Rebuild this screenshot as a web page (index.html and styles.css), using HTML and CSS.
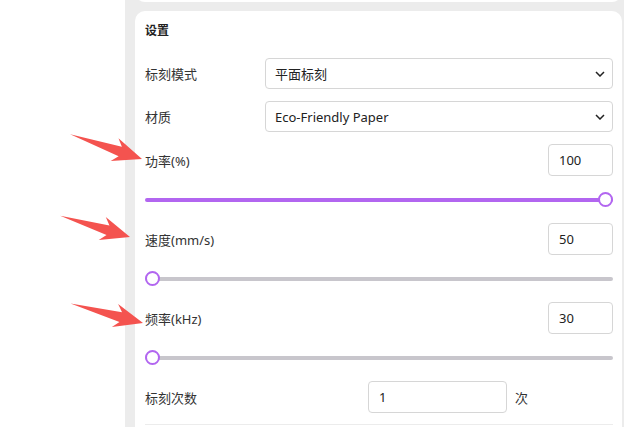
FILE: index.html
```html
<!DOCTYPE html>
<html lang="zh-CN">
<head>
  <meta charset="UTF-8">
  <meta name="viewport" content="width=device-width, initial-scale=1.0">
  <title>设置</title>
  <link rel="stylesheet" href="styles.css">
</head>
<body>

  <div class="app">
    <aside class="side"></aside>

    <main class="main">
      <div class="card card-prev"></div>

      <section class="card settings">
        <h3 class="card-title">设置</h3>

        <div class="field field-select">
          <label class="label">标刻模式</label>
          <div class="select-wrap">
            <select class="select">
              <option>平面标刻</option>
            </select>
            <svg class="chevron" width="10" height="6" viewBox="0 0 10 6"><path d="M1 1 L5 5 L9 1" /></svg>
          </div>
        </div>

        <div class="field field-select">
          <label class="label">材质</label>
          <div class="select-wrap">
            <select class="select">
              <option>Eco-Friendly Paper</option>
            </select>
            <svg class="chevron" width="10" height="6" viewBox="0 0 10 6"><path d="M1 1 L5 5 L9 1" /></svg>
          </div>
        </div>

        <div class="field field-split">
          <label class="label">功率(%)</label>
          <input class="num" type="text" value="100">
        </div>
        <div class="slider-row">
          <input class="slider" type="range" min="0" max="100" value="100" style="--fill: 100%">
        </div>

        <div class="field field-split">
          <label class="label">速度(mm/s)</label>
          <input class="num" type="text" value="50">
        </div>
        <div class="slider-row">
          <input class="slider" type="range" min="50" max="10000" value="50" style="--fill: 0%">
        </div>

        <div class="field field-split">
          <label class="label">频率(kHz)</label>
          <input class="num" type="text" value="30">
        </div>
        <div class="slider-row">
          <input class="slider" type="range" min="30" max="100" value="30" style="--fill: 0%">
        </div>

        <div class="field">
          <label class="label label-wide">标刻次数</label>
          <input class="num num-wide" type="text" value="1">
          <span class="unit">次</span>
        </div>

        <div class="divider"></div>
      </section>
    </main>

    <!-- 标注箭头 -->
    <svg class="arrows" width="624" height="427" viewBox="0 0 624 427">
      <polygon transform="translate(142 159) rotate(19)" points="-76,0 -23,-5 -29,-12 0,0 -29,12 -23,5" />
      <polygon transform="translate(130 237) rotate(17)" points="-73,0 -23,-5 -29,-12 0,0 -29,12 -23,5" />
      <polygon transform="translate(143 323) rotate(15)" points="-75,0 -23,-5 -29,-12 0,0 -29,12 -23,5" />
    </svg>
  </div>

</body>
</html>
```

FILE: styles.css
```css
body {
  margin: 0;
  padding: 0;
  background-color: #ffffff;
  font-family: "Noto Sans", "Noto Sans CJK SC", sans-serif;
  font-size: 13px;
  color: #333;
}
.app {
  position: relative;
  display: flex;
  width: 624px;
  height: 427px;
  overflow: hidden;
}
.side {
  width: 125px;
  flex-shrink: 0;
  background-color: #ffffff;
}
.main {
  flex: 1;
  background-color: #ececec;
  padding: 0 2px 0 10px;
}
.card {
  background-color: #ffffff;
  border-radius: 10px;
}
.card-prev {
  height: 32px;
  margin-top: -30px;
  margin-bottom: 9px;
}
.settings {
  padding: 12px 9px 20px 10px;
}
.card-title {
  margin: 0 0 19px;
  font-size: 12px;
  line-height: 16px;
  font-weight: bold;
  color: #222;
}
.field {
  display: flex;
  align-items: center;
  height: 32px;
}
.field-select {
  height: 31px;
  margin-bottom: 12px;
}
.field-split {
  justify-content: space-between;
}
.label {
  width: 120px;
  flex-shrink: 0;
  color: #333;
}
.label-wide {
  width: 223px;
}
.select-wrap {
  position: relative;
  flex: 1;
  height: 100%;
}
.select {
  -webkit-appearance: none;
  appearance: none;
  width: 100%;
  height: 100%;
  box-sizing: border-box;
  border: 1px solid #d6d6d6;
  border-radius: 4px;
  background-color: #ffffff;
  padding: 0 24px 0 9px;
  font-family: inherit;
  font-size: 13px;
  color: #222;
  outline: none;
}
.chevron {
  position: absolute;
  right: 8px;
  top: 13px;
  fill: none;
  stroke: #222;
  stroke-width: 1.5;
}
.num {
  width: 65px;
  height: 32px;
  box-sizing: border-box;
  border: 1px solid #d6d6d6;
  border-radius: 4px;
  padding: 0 10px;
  font-family: inherit;
  font-size: 13px;
  color: #222;
  outline: none;
}
.num-wide {
  width: 139px;
}
.unit {
  margin-left: 8px;
  color: #333;
}
.slider-row {
  display: flex;
  align-items: center;
  height: 47px;
}
.slider {
  -webkit-appearance: none;
  appearance: none;
  width: 100%;
  height: 4px;
  margin: 0;
  border-radius: 2px;
  background: linear-gradient(to right, #b266f0 var(--fill), #c8c6cc var(--fill));
  outline: none;
}
.slider::-webkit-slider-thumb {
  -webkit-appearance: none;
  width: 15px;
  height: 15px;
  box-sizing: border-box;
  border-radius: 50%;
  background-color: #ffffff;
  border: 2px solid #b266f0;
}
.divider {
  margin-top: 11px;
  border-top: 1px solid #ececec;
}
.arrows {
  position: absolute;
  top: 0;
  left: 0;
  pointer-events: none;
  fill: #f4534f;
}
```
